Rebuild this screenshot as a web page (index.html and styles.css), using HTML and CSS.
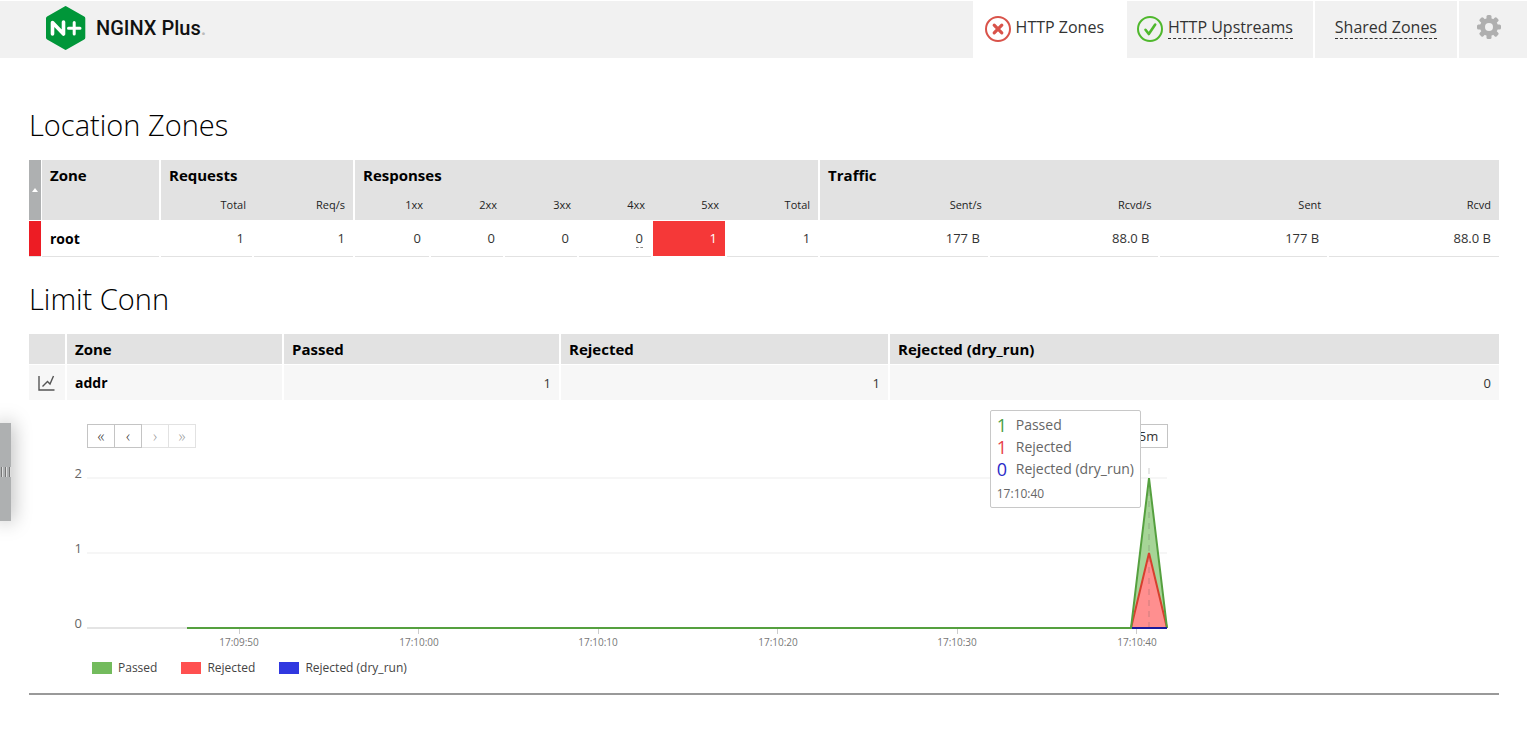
FILE: index.html
```html
<!DOCTYPE html>
<html lang="en">
<head>
<meta charset="utf-8">
<title>NGINX Plus Dashboard</title>
<link rel="stylesheet" href="styles.css">
</head>
<body>
<header class="header">
  <a class="logo" href="#">
    <svg class="logo-mark" width="40" height="44" viewBox="0 0 40 44" aria-hidden="true">
      <path d="M18.6.4q1-.6 2 0L38.2 10.500q1.100.6 1.100 1.900v19.200q0 1.300-1.100 1.900L20.600 43.600q-1 .6-2 0L1.100 33.500Q0 32.900 0 31.600V12.400q0-1.300 1.100-1.900z" fill="#009639"/>
      <path d="M6.500 28V16.500L17.500 28V16" fill="none" stroke="#fff" stroke-width="3.600" stroke-linecap="round" stroke-linejoin="round"/>
      <path d="M22.500 22.200h11.500M28.200 16.500v11.500" fill="none" stroke="#fff" stroke-width="3" stroke-linecap="round"/>
    </svg>
    <span class="logo-text">NGINX Plus<span class="logo-dot">.</span></span>
  </a>
  <nav class="tabs">
    <a class="tab tab-zones tab-active" href="#">
      <svg width="26" height="26" viewBox="0 0 26 26" aria-hidden="true"><circle cx="13" cy="13" r="12" fill="none" stroke="#d9534a" stroke-width="2"/><path d="M9.200 9.200l7.600 7.600M16.800 9.200l-7.600 7.600" stroke="#d9534a" stroke-width="3.200" stroke-linecap="round"/></svg>
      <span class="tab-label">HTTP Zones</span>
    </a>
    <a class="tab tab-upstreams" href="#">
      <svg width="26" height="26" viewBox="0 0 26 26" aria-hidden="true"><circle cx="13" cy="13" r="12" fill="none" stroke="#4fb82d" stroke-width="2"/><path d="M8.500 13.800l3.300 4.200 6.400-9.400" fill="none" stroke="#4fb82d" stroke-width="2.600" stroke-linecap="round" stroke-linejoin="round"/></svg>
      <span class="tab-label">HTTP Upstreams</span>
    </a>
    <a class="tab tab-shared" href="#"><span class="tab-label">Shared Zones</span></a>
    <button class="tab tab-settings" type="button" aria-label="Settings">
      <svg width="24" height="24" viewBox="0 0 24 24" aria-hidden="true">
        <g fill="#afafaf">
          <rect x="9.500" y="0" width="5" height="24" rx="1.500"/>
          <rect x="9.500" y="0" width="5" height="24" rx="1.500" transform="rotate(45 12 12)"/>
          <rect x="9.500" y="0" width="5" height="24" rx="1.500" transform="rotate(90 12 12)"/>
          <rect x="9.500" y="0" width="5" height="24" rx="1.500" transform="rotate(135 12 12)"/>
          <circle cx="12" cy="12" r="9"/>
        </g>
        <circle cx="12" cy="12" r="4" fill="#f1f1f1"/>
      </svg>
    </button>
  </nav>
</header>

<main class="content">
  <section>
    <h1 class="title">Location Zones</h1>
    <table class="table zones">
      <colgroup><col class="c-sort"><col class="c-zone"><col class="c-total"><col class="c-rate"><col class="c-first"><col class="c-code"><col class="c-code"><col class="c-code"><col class="c-code"><col class="c-total"><col><col><col><col></colgroup>
      <thead>
        <tr class="groups">
          <th class="sort" rowspan="2"><svg width="6" height="4" viewBox="0 0 6 4" aria-hidden="true"><path d="M0 4L3 0l3 4z" fill="#fff"/></svg></th>
          <th class="sep">Zone</th>
          <th class="sep" colspan="2">Requests</th>
          <th class="sep" colspan="6">Responses</th>
          <th colspan="4">Traffic</th>
        </tr>
        <tr class="subs">
          <th class="sep"></th>
          <th>Total</th><th class="sep">Req/s</th>
          <th>1xx</th><th>2xx</th><th>3xx</th><th>4xx</th><th>5xx</th><th class="sep">Total</th>
          <th>Sent/s</th><th>Rcvd/s</th><th>Sent</th><th>Rcvd</th>
        </tr>
      </thead>
      <tbody>
        <tr>
          <td class="status"></td>
          <td class="name">root</td>
          <td>1</td><td>1</td>
          <td>0</td><td>0</td><td>0</td><td><span class="hint">0</span></td><td class="alert">1</td><td>1</td>
          <td>177 B</td><td>88.0 B</td><td>177 B</td><td>88.0 B</td>
        </tr>
      </tbody>
    </table>
  </section>

  <section class="limit">
    <h1 class="title">Limit Conn</h1>
    <table class="table conn">
      <colgroup><col class="c-icon"><col class="c-name"><col class="c-passed"><col class="c-rejected"><col></colgroup>
      <thead>
        <tr><th></th><th>Zone</th><th>Passed</th><th>Rejected</th><th>Rejected (dry_run)</th></tr>
      </thead>
      <tbody>
        <tr>
          <td class="icon-cell"><button class="chart-toggle" type="button" aria-label="Toggle chart"><svg width="18" height="18" viewBox="0 0 18 18" aria-hidden="true"><path d="M1 2v14h15.500M5 12l4.500-4.500 2.500 2.500L15.500 2M4.500 12.500l1-1" fill="none" stroke="#555" stroke-width="1.400"/></svg></button></td>
          <td class="name">addr</td><td>1</td><td>1</td><td>0</td>
        </tr>
      </tbody>
    </table>

    <div class="chart">
      <div class="controls">
        <div class="pager">
          <button type="button">«</button><button type="button">‹</button><button type="button" disabled>›</button><button type="button" disabled>»</button>
        </div>
        <button class="range" type="button">5m</button>
      </div>
      <svg class="plot" width="1102" height="204" viewBox="67 448 1102 204" role="img" aria-label="Connections over time">
        <path d="M87 478h1080M87 553h1080" stroke="#f6f6f6" stroke-width="2"/>
        <path d="M87 628h1080" stroke="#e4e4e4" stroke-width="2"/>
        <path d="M239.500 629v5M418.500 629v5M598.500 629v5M777.500 629v5M957.500 629v5M1136.500 629v5" stroke="#ccc"/>
        <path d="M1131 628L1149 478l18 150z" fill="#a6d597"/>
        <path d="M1131 628L1149 553l18 75z" fill="#ff8f8f"/>
        <path d="M1149 468V628" stroke="#555" stroke-opacity=".15" stroke-width="2" stroke-dasharray="6 5"/>
        <path d="M1131 628L1149 553l18 75" fill="none" stroke="#d6402e" stroke-width="2"/>
        <path d="M187 628h944L1149 478l18 150" fill="none" stroke="#55a03f" stroke-width="2"/>
        <path d="M1132 628h35" stroke="#1a1a9c" stroke-width="2"/>
        <g class="y-labels"><text x="82" y="478">2</text><text x="82" y="553">1</text><text x="82" y="628">0</text></g>
        <g class="x-labels"><text x="239" y="646">17:09:50</text><text x="419" y="646">17:10:00</text><text x="598" y="646">17:10:10</text><text x="778" y="646">17:10:20</text><text x="957" y="646">17:10:30</text><text x="1137" y="646">17:10:40</text></g>
      </svg>
      <ul class="legend">
        <li><span class="swatch passed"></span>Passed</li>
        <li><span class="swatch rejected"></span>Rejected</li>
        <li><span class="swatch dry"></span>Rejected (dry_run)</li>
      </ul>
      <div class="tooltip">
        <div class="tip-row"><span class="tip-value t-passed">1</span>Passed</div>
        <div class="tip-row"><span class="tip-value t-rejected">1</span>Rejected</div>
        <div class="tip-row"><span class="tip-value t-dry">0</span>Rejected (dry_run)</div>
        <div class="tip-time">17:10:40</div>
      </div>
    </div>
  </section>
</main>

<button class="handle" type="button" aria-label="Open panel"><span></span><span></span><span></span></button>
</body>
</html>
```
FILE: styles.css
```css
* { box-sizing: border-box; }
body { margin: 0; padding: 1px 4px 0 0; background: #fff; color: #333; font-family: "Open Sans", "Noto Sans", sans-serif; font-size: 13px; }
button { font-family: inherit; cursor: pointer; }

.header { display: flex; justify-content: space-between; height: 57px; background: #f1f1f1; }
.logo { display: flex; align-items: center; gap: 10px; padding: 0 0 3px 46px; text-decoration: none; }
.logo-text { font-family: Roboto, sans-serif; font-weight: 500; font-size: 20px; color: #111; }
.logo-dot { color: #bbb; }
.tabs { display: flex; gap: 2px; }
.tab { display: flex; align-items: center; gap: 5px; padding-bottom: 2px; border: 0; background: #f1f1f1; box-shadow: -2px 0 #fff; color: #333; font-size: 16px; font-weight: 400; text-decoration: none; }
.tab-active { background: #fff; box-shadow: none; }
.tab-zones { padding-right: 21px; padding-left: 12px; }
.tab-upstreams { padding-right: 20px; padding-left: 10px; }
.tab-shared { padding-right: 20px; padding-left: 20px; }
.tab-settings { padding: 0 26px 5px 18px; }
.tab-label { margin-bottom: 2px; line-height: 22px; border-bottom: 1px dashed #333; }
.tab-active .tab-label { border-bottom-color: transparent; }

.content { padding: 47px 28px 0 29px; }
.title { margin: 0 0 15px; font-weight: 300; font-size: 29px; line-height: 40px; color: #000; }
.limit { margin-top: 22px; border-bottom: 2px solid #999; }

.table { width: 100%; table-layout: fixed; border-collapse: separate; border-spacing: 0; }
.table th, .table td { padding: 0 8px; border-right: 2px solid #fff; }
.table th:last-child, .table td:last-child { border-right: 0; }
.table th { height: 30px; background: #e2e2e2; color: #000; font-size: 15px; text-align: left; }
.table td { height: 36px; text-align: right; font-size: 13px; }
.table .name { color: #000; font-size: 14px; font-weight: 700; text-align: left; }

.zones th:not(.sep) { border-right: 0; }
.zones .subs th { height: 31px; padding-bottom: 2px; border-bottom: 1px solid #fff; font-size: 11px; font-weight: 400; text-align: right; color: #222; }
.zones td { padding-bottom: 2px; box-shadow: inset 0 -1px #e2e2e2; }
.zones .groups .sort { padding: 0 0 8px; border-right: 1px solid #fff; border-bottom: 1px solid #fff; background: #aeb0b1; text-align: center; vertical-align: middle; }
.zones .status { border-right-width: 1px; background: #ed1c24; }
.zones .alert { background: #f53838; color: #fff; box-shadow: inset 0 -1px #fff; }
.hint { border-bottom: 1px dashed #888; }
.c-sort { width: 13px; }
.c-zone { width: 119px; }
.c-total { width: 93px; }
.c-rate { width: 101px; }
.c-first { width: 76px; }
.c-code { width: 74px; }

.conn th { height: 31px; border-bottom: 1px solid #fff; }
.conn td { height: 35px; background: #f7f7f7; }
.table .icon-cell { padding: 0; text-align: center; }
.chart-toggle { display: flex; margin: auto; padding: 0; border: 0; background: none; }
.c-icon { width: 38px; }
.c-name { width: 217px; }
.c-passed { width: 277px; }
.c-rejected { width: 329px; }

.chart { position: relative; width: 1140px; padding: 24px 0 16px 38px; }
.controls { display: flex; justify-content: space-between; padding: 0 1px 0 20px; }
.pager { display: flex; }
.pager button, .range { height: 24px; border: 1px solid #c4c4c4; background: #fff; color: #333; font-size: 13px; padding: 0; }
.pager button { width: 28px; margin-right: -1px; font-size: 16px; font-weight: 300; line-height: 20px; }
.pager button:disabled { border-color: #e2e2e2; border-left-width: 0; width: 27px; margin-right: 0; color: #999; }
.pager button:disabled:nth-child(3) { margin-left: 1px; }
.range { width: 37px; padding-right: 2px; }
.plot { display: block; }
.y-labels { font-size: 13px; fill: #666; text-anchor: end; }
.x-labels { font-size: 10px; fill: #777; text-anchor: middle; }
.legend { display: flex; gap: 24px; margin: 7px 0 0; padding: 0 0 0 25px; list-style: none; font-size: 12px; line-height: 18px; color: #444; }
.legend li { display: flex; align-items: center; gap: 6px; }
.swatch { width: 20px; height: 12px; }
.passed { background: #73bb5d; }
.rejected { background: #ff5050; }
.dry { background: #3038e0; }

.tooltip { position: absolute; top: 10px; right: 28px; padding: 3px 6px 4px; border: 1px solid #c8c8c8; border-radius: 2px; background: #fff; color: #666; font-size: 14px; white-space: nowrap; }
.tip-row { display: flex; align-items: center; gap: 8px; line-height: 22px; }
.tip-value { font-size: 18px; width: 11px; }
.t-passed { color: #4a9f48; }
.t-rejected { color: #e8404a; }
.t-dry { color: #2a2ac8; }
.tip-time { margin-top: 5px; font-size: 12px; line-height: 18px; }

.handle { position: fixed; left: 0; top: 423px; display: flex; align-items: center; justify-content: center; gap: 2px; width: 11px; height: 98px; padding: 0; border: 0; background: #aeb0b1; box-shadow: 0 0 20px rgba(0, 0, 0, .4); }
.handle span { width: 2px; height: 10px; border-left: 1px solid #777; background: #ddd; }
```
